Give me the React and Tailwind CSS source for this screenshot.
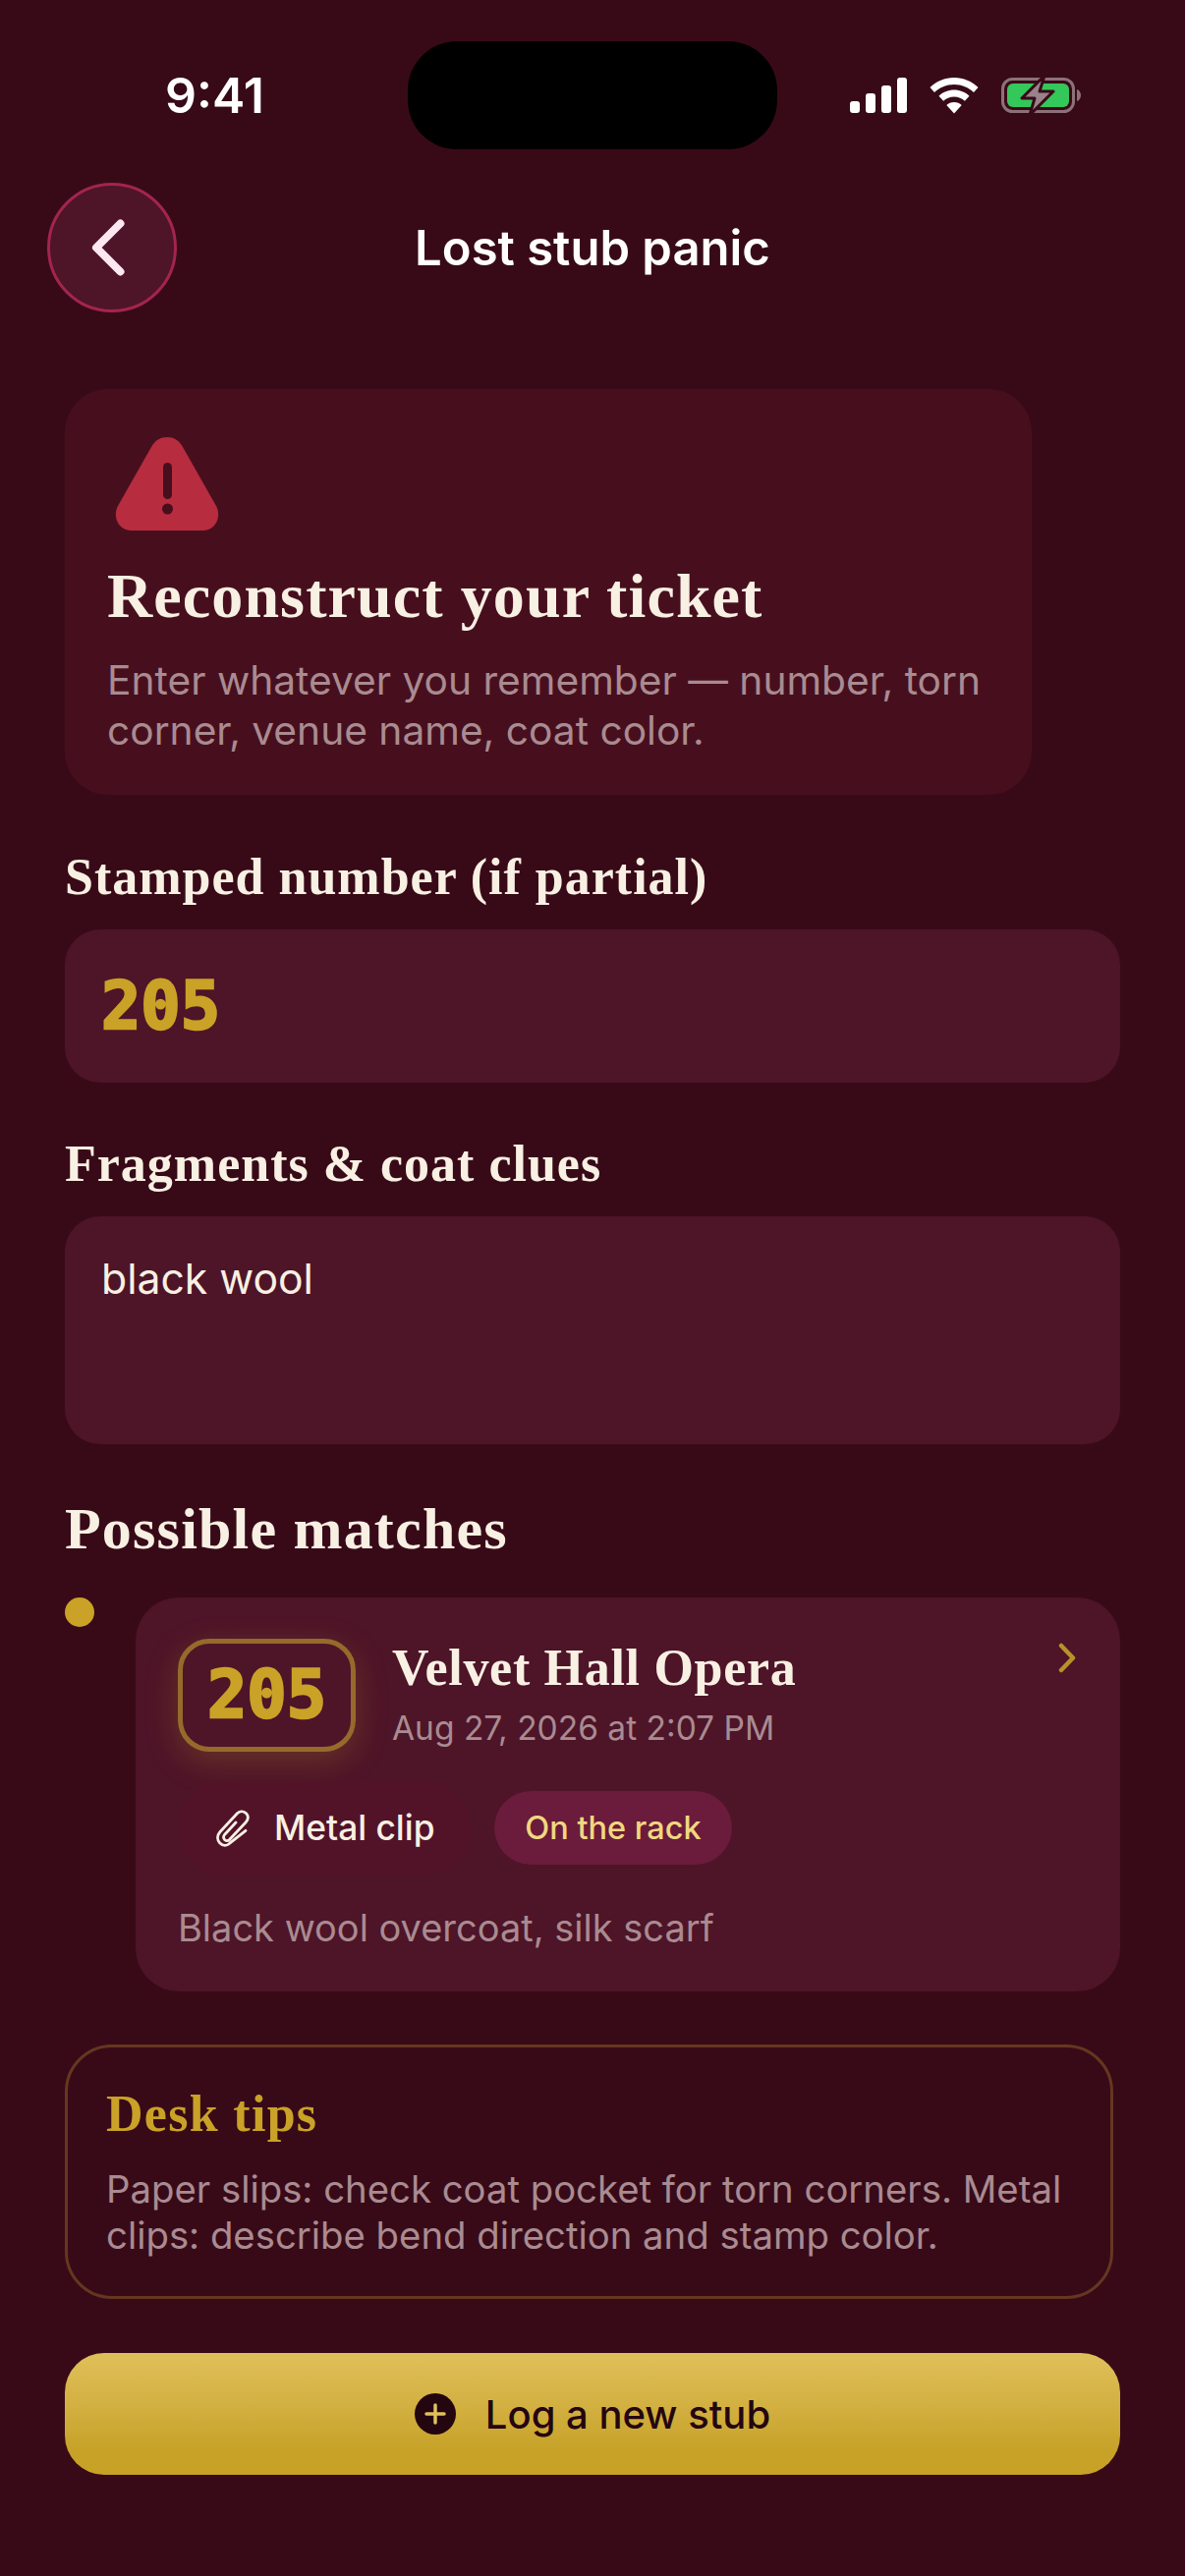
import React from 'react';

const serif = "font-['Liberation_Serif',serif] font-bold";
const mono = "font-['DejaVu_Sans_Mono',monospace] font-bold [-webkit-text-stroke:2.500px_#c9a227]";

function StatusIcons() {
  return (
    <div className="flex items-center gap-[23px]">
      <svg width="58" height="36" viewBox="0 0 58 36" fill="#fff">
        <rect x="0" y="24" width="10" height="12" rx="3" />
        <rect x="16" y="16" width="10" height="20" rx="3" />
        <rect x="32" y="8" width="10" height="28" rx="3" />
        <rect x="48" y="0" width="10" height="36" rx="3" />
      </svg>
      <svg width="50" height="37" viewBox="0 0 50 37" fill="#fff">
        <path d="M25 0C15.500 0 7 3.700.500 10l4.500 5C10.300 10 17.200 7 25 7s14.700 3 20 8l4.500-5C43 3.700 34.500 0 25 0z" />
        <path d="M25 12.500c-6 0-11.500 2.300-15.500 6.200l4.600 5c2.800-2.700 6.600-4.300 10.900-4.300s8.100 1.600 10.900 4.300l4.600-5C36.500 14.800 31 12.500 25 12.500z" />
        <path d="M25 25c-3 0-5.700 1.100-7.700 3L25 36.500l7.700-8.500c-2-1.900-4.700-3-7.700-3z" />
      </svg>
      <svg width="82" height="40" viewBox="0 0 82 40">
        <rect x="1.500" y="3.500" width="72" height="33" rx="10" fill="none" stroke="#8d7178" strokeWidth="3" />
        <rect x="6" y="8" width="63" height="24" rx="6" fill="#34c759" />
        <path d="M77 14c2.500.8 4 3 4 6s-1.500 5.200-4 6z" fill="#8d7178" />
        <path d="M44 0 21 23h13l-5 17 24-24H39z" fill="#99828a" stroke="#380a18" strokeWidth="3" strokeLinejoin="round" />
      </svg>
    </div>
  );
}

function FieldLabel({ children }) {
  return <h2 className={`${serif} text-[#f8f0e3] text-[52px] leading-[58px] tracking-[1px]`}>{children}</h2>;
}

export default function App() {
  return (
    <div className="min-h-[2622px] bg-[#380a18] font-['Inter',sans-serif] overflow-hidden">
      {/* Status bar */}
      <div className="flex items-center pt-[42px] pl-[168px]">
        <span className="w-[247px] text-white text-[50px] font-semibold leading-[110px]">9:41</span>
        <div className="w-[376px] h-[110px] bg-black rounded-[50px]" />
        <div className="ml-[74px]"><StatusIcons /></div>
      </div>

      {/* Header */}
      <div className="relative flex items-center justify-center mt-[34px] h-[132px]">
        <button className="absolute left-[48px] top-0 w-[132px] h-[132px] rounded-full bg-[#4e1428] border-[3px] border-[#a3244f] flex items-center justify-center">
          <svg width="34" height="58" viewBox="0 0 34 58" fill="none" className="-ml-[9px]">
            <path d="M29.500 4.500 5 29l24.500 24.500" stroke="#fde7f1" strokeWidth="8" strokeLinecap="round" strokeLinejoin="round" />
          </svg>
        </button>
        <h1 className="text-white text-[49px] font-semibold pt-[2px]">Lost stub panic</h1>
      </div>

      <div className="px-[66px] pt-[78px]">
        {/* Intro card */}
        <div className="w-[984px] h-[413px] rounded-[44px] bg-[#470f1e] pl-[43px] pt-[49px]">
          <svg width="106" height="95" viewBox="0 0 106 95" className="ml-[8px]">
            <path d="M53 0c7 0 12 3 16 10l34 60c6 11-1 25-13 25H16C4 95-3 81 3 70L37 10C41 3 46 0 53 0z" fill="#b72c3f" />
            <rect x="49" y="26" width="9" height="37" rx="4.500" fill="#470f1e" />
            <circle cx="53.500" cy="73" r="5.500" fill="#470f1e" />
          </svg>
          <h3 className={`${serif} text-[#f8f0e3] text-[64px] leading-[72px] tracking-[1.100px] mt-[31px]`}>Reconstruct your ticket</h3>
          <p className="text-[#a98b91] text-[40.700px] leading-[51px] mt-[24px] w-[920px]">
            Enter whatever you remember — number, torn corner, venue name, coat color.
          </p>
        </div>

        {/* Form */}
        <div className="mt-[55px]"><FieldLabel>Stamped number (if partial)</FieldLabel></div>
        <div className="mt-[24px] h-[156px] w-[1074px] rounded-[36px] bg-[#4e1428] pl-[37px] flex items-center">
          <span className={`${mono} text-[#c9a227] text-[67px]`}>205</span>
        </div>

        <div className="mt-[54px]"><FieldLabel>Fragments &amp; coat clues</FieldLabel></div>
        <div className="mt-[24px] h-[232px] w-[1074px] rounded-[36px] bg-[#4e1428] pl-[37px] pt-[36px]">
          <span className="text-[#f8f0e3] text-[42.700px] leading-[56px] block">black wool</span>
        </div>

        <h2 className={`${serif} text-[#f8f0e3] text-[60px] leading-[68px] tracking-[1.200px] mt-[52px]`}>Possible matches</h2>

        {/* Match row */}
        <div className="flex items-start gap-[42px] mt-[36px]">
          <div className="w-[30px] h-[30px] rounded-full bg-[#c9a227] shrink-0" />
          <div className="relative w-[1002px] h-[401px] rounded-[44px] bg-[#4e1428] pl-[43px] pt-[42px]">
            <svg width="18" height="31" viewBox="0 0 18 31" fill="none" className="absolute right-[45px] top-[46px]">
              <path d="M3 3l12 12.500L3 28" stroke="#b8912a" strokeWidth="4.500" strokeLinecap="round" strokeLinejoin="round" />
            </svg>
            <div className="flex items-start gap-[37px]">
              <div className="w-[181px] h-[115px] rounded-[32px] border-[5px] border-[#966a2b] shadow-[0_10px_34px_rgba(201,162,39,0.22)] flex items-center justify-center">
                <span className={`${mono} text-[#c9a227] text-[67px]`}>205</span>
              </div>
              <div>
                <div className={`${serif} text-[#f8f0e3] text-[52px] leading-[60px] tracking-[0.700px]`}>Velvet Hall Opera</div>
                <div className="text-[#a98b91] text-[33.500px] leading-[42px] mt-[10px]">Aug 27, 2026 at 2:07 PM</div>
              </div>
            </div>
            <div className="flex items-center gap-[24px] mt-[30px] -ml-[1px]">
              <div className="h-[95px] w-[299px] rounded-[47px] bg-[#521329] flex items-center pl-[40px] gap-[25px]">
                <svg width="34" height="38" viewBox="0 0 34 38" fill="none" stroke="#f8f0e3" strokeWidth="2.800" strokeLinecap="round" strokeLinejoin="round">
                  <path d="M20 13 8.500 25.500c-2 2.500-.5 5.200 1.500 6 1.200.4 2.500 0 3.500-1L30 13c3-3.500 2.800-7 .5-9.300s-6-2.700-8.800-.2L4 22.500c-3.500 4-3 8.500-.2 11.500 3 3 7 3 10 .2L30 21.300" />
                </svg>
                <span className="text-[#f8f0e3] text-[35.300px] font-medium pt-[2px]">Metal clip</span>
              </div>
              <div className="h-[75px] w-[242px] rounded-[38px] bg-[#6b1b3b] flex items-center justify-center">
                <span className="text-[#f0d880] text-[32.500px] font-medium pt-[1px]">On the rack</span>
              </div>
            </div>
            <p className="text-[#a98b91] text-[38px] leading-[48px] mt-[30px]">Black wool overcoat, silk scarf</p>
          </div>
        </div>

        {/* Tips */}
        <div className="mt-[54px] h-[259px] w-[1067px] rounded-[48px] border-[3px] border-[#65371f] pl-[39px] pt-[40px]">
          <div className={`${serif} text-[#c9a227] text-[52px] leading-[56px] tracking-[1.300px]`}>Desk tips</div>
          <p className="text-[#a98b91] text-[38.300px] leading-[47px] mt-[25px] w-[1000px]">
            Paper slips: check coat pocket for torn corners. Metal clips: describe bend direction and stamp color.
          </p>
        </div>

        {/* CTA */}
        <button className="mt-[55px] h-[124px] w-[1074px] rounded-[40px] bg-gradient-to-b from-[#e0c05a] to-[#c7a227] to-80% flex items-center justify-center gap-[30px]">
          <svg width="42" height="42" viewBox="0 0 42 42">
            <circle cx="21" cy="21" r="21" fill="#240610" />
            <path d="M21 12v18M12 21h18" stroke="#e0c05a" strokeWidth="3.500" strokeLinecap="round" />
          </svg>
          <span className="text-[#240610] text-[40px] font-medium pt-[2px]">Log a new stub</span>
        </button>
      </div>
    </div>
  );
}
